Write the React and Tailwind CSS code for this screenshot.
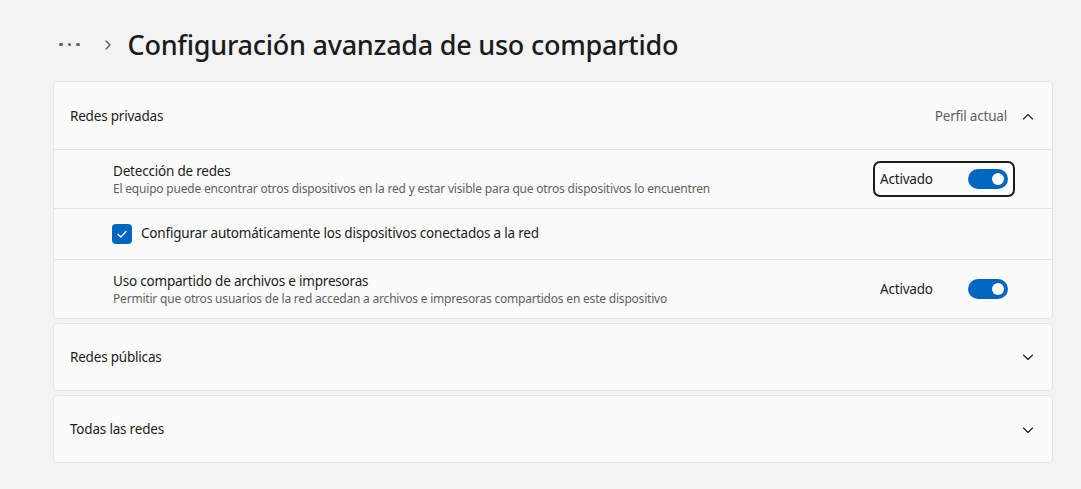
import React from "react";

const font = { fontFamily: '"Segoe UI", "Noto Sans", "Open Sans", sans-serif' };

function ChevronUp() {
  return (
    <svg width="12" height="12" viewBox="0 0 12 12" fill="none">
      <path d="M1.5 8L6 3.5L10.5 8" stroke="#1b1b1b" strokeWidth="1.1" strokeLinecap="round" strokeLinejoin="round" />
    </svg>
  );
}
function ChevronDown() {
  return (
    <svg width="12" height="12" viewBox="0 0 12 12" fill="none">
      <path d="M1.5 4L6 8.5L10.5 4" stroke="#1b1b1b" strokeWidth="1.1" strokeLinecap="round" strokeLinejoin="round" />
    </svg>
  );
}

function Toggle() {
  return (
    <div className="w-[40px] h-[20px] rounded-full bg-[#0067c0] flex items-center justify-end pr-[4px]">
      <div className="w-[12px] h-[12px] rounded-full bg-white" />
    </div>
  );
}

function Row({ title, desc, focused }) {
  return (
    <div className="flex items-center h-[59px] pl-[59px] pr-[37px] border-t border-[#e5e5e5]">
      <div className="flex-1 flex flex-col pt-[1px]">
        <div className="text-[13.5px] tracking-[-0.2px] leading-[19px] text-[#1b1b1b]">{title}</div>
        <div className="text-[12px] tracking-[-0.2px] leading-[16px] text-[#5f5f5f]">{desc}</div>
      </div>
      <div className={"flex items-center h-[36px] w-[142px] pl-[5px] pr-[5px] rounded-[7px] border-2 " + (focused ? "border-[#1b1b1b]" : "border-transparent")}>
        <span className="text-[13.5px] tracking-[-0.2px] text-[#1b1b1b] flex-1 pt-[1px]">Activado</span>
        <Toggle />
      </div>
    </div>
  );
}

export default function App() {
  return (
    <div className="w-[1081px] h-[489px] bg-[#f3f3f3] overflow-hidden" style={font}>
      <div className="flex items-center h-[52px] pt-[37px] pl-[59px]">
        <div className="flex gap-[5px] items-center">
          <span className="w-[3.5px] h-[3.5px] rounded-full bg-[#616161]" />
          <span className="w-[3.5px] h-[3.5px] rounded-full bg-[#616161]" />
          <span className="w-[3.5px] h-[3.5px] rounded-full bg-[#616161]" />
        </div>
        <svg className="ml-[24px]" width="8" height="12" viewBox="0 0 8 12" fill="none">
          <path d="M2 2L6 6L2 10" stroke="#5a5a5a" strokeWidth="1.3" strokeLinecap="round" strokeLinejoin="round" />
        </svg>
        <h1 className="ml-[16px] text-[27px] font-medium tracking-[-0.25px] text-[#1b1b1b] leading-none">Configuración avanzada de uso compartido</h1>
      </div>

      <div className="mt-[29px] ml-[53px] w-[1000px] flex flex-col gap-[4px]">
        <div className="bg-[#fbfbfb] border border-[#e5e5e5] rounded-[5px]">
          <div className="flex items-center h-[67px] pl-[16px] pr-[18px] pt-[2px]">
            <span className="flex-1 text-[13.5px] tracking-[-0.2px] text-[#1b1b1b]">Redes privadas</span>
            <span className="text-[13.5px] tracking-[-0.2px] text-[#5f5f5f] mr-[15px]">Perfil actual</span>
            <ChevronUp />
          </div>
          <Row
            title="Detección de redes"
            desc="El equipo puede encontrar otros dispositivos en la red y estar visible para que otros dispositivos lo encuentren"
            focused
          />
          <div className="flex items-center h-[51px] pl-[58px] border-t border-[#e5e5e5]">
            <div className="w-[20px] h-[20px] rounded-[4px] bg-[#0067c0] flex items-center justify-center">
              <svg width="12" height="12" viewBox="0 0 12 12" fill="none">
                <path d="M2 6.3L4.8 9L10 3.5" stroke="white" strokeWidth="1.2" strokeLinecap="round" strokeLinejoin="round" />
              </svg>
            </div>
            <span className="ml-[9px] text-[13.5px] tracking-[-0.2px] text-[#1b1b1b] -mt-[1px]">Configurar automáticamente los dispositivos conectados a la red</span>
          </div>
          <Row
            title="Uso compartido de archivos e impresoras"
            desc="Permitir que otros usuarios de la red accedan a archivos e impresoras compartidos en este dispositivo"
          />
        </div>

        <div className="bg-[#fbfbfb] border border-[#e5e5e5] rounded-[5px] flex items-center h-[68px] pl-[16px] pr-[18px]">
          <span className="flex-1 text-[13.5px] tracking-[-0.2px] text-[#1b1b1b]">Redes públicas</span>
          <ChevronDown />
        </div>
        <div className="bg-[#fbfbfb] border border-[#e5e5e5] rounded-[5px] flex items-center h-[68px] pl-[16px] pr-[18px] pt-[1px]">
          <span className="flex-1 text-[13.5px] tracking-[-0.2px] text-[#1b1b1b]">Todas las redes</span>
          <ChevronDown />
        </div>
      </div>
    </div>
  );
}
